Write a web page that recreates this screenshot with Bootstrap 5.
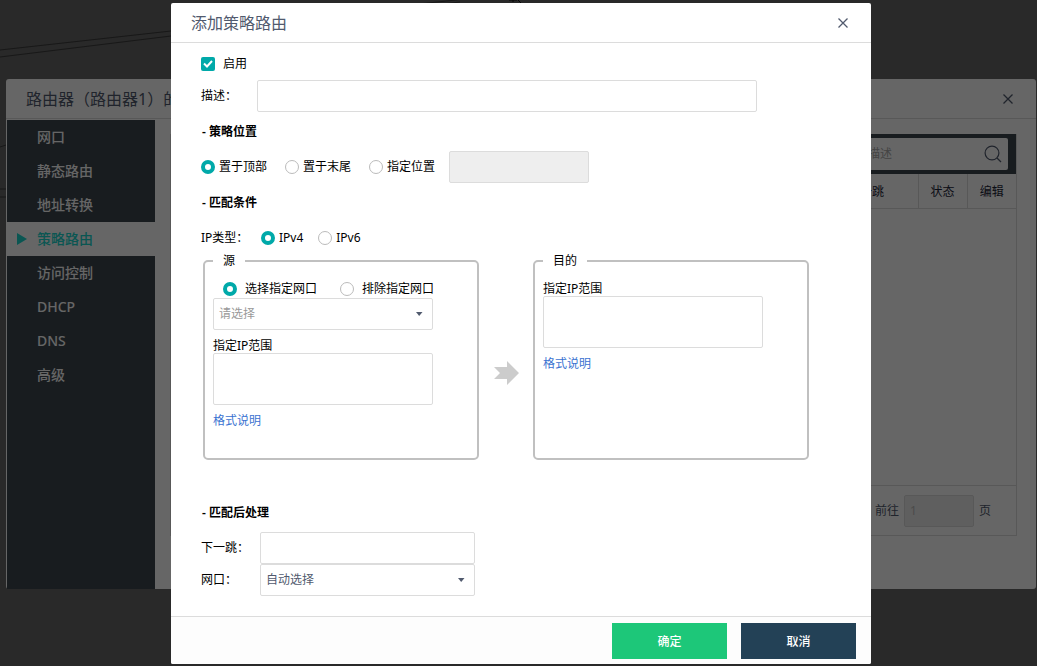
<!DOCTYPE html>
<html lang="zh-CN">
<head>
<meta charset="utf-8">
<meta name="viewport" content="width=device-width, initial-scale=1">
<title>添加策略路由</title>
<link href="https://cdn.jsdelivr.net/npm/bootstrap@5.3.0/dist/css/bootstrap.min.css" rel="stylesheet">
<style>
  :root { --teal: #00a9a9; --line: #dcdcdc; --ink: #515a6e; }
  body {
    min-height: 100vh; background: #666; color: #000; overflow: hidden;
    font: 12px/18px "Noto Sans", "Noto Sans CJK SC", sans-serif;
  }
  /* canvas lines behind the windows */
  .topology { top: 0; left: 0; }

  /* router window */
  .router-window { margin: 79px 1px 0 6px; background: #fff; border-radius: 3px; }
  .title-bar { height: 40px; padding: 0 20px; font-size: 16px; color: var(--ink); border-bottom: 1px solid var(--line); }
  .title-bar h1, .title-bar h2 { font-size: 16px; font-weight: 400; line-height: 24px; }
  .close-x { width: 16px; height: 16px; color: var(--ink); line-height: 0; }
  .side-menu { width: 148px; min-height: 469px; margin: 1px 0 0 1px; background: #3c464e; }
  .side-menu .nav-link { height: 34px; padding: 0 0 0 30px; font-size: 14px; line-height: 34px; font-weight: 500; color: #fff; position: relative; }
  .side-menu .nav-link.active { background: #fff; color: #1ad6ce; }
  .side-menu .nav-link.active::before {
    content: ""; position: absolute; left: 10px; top: 11px;
    border: 6px solid transparent; border-left: 10px solid #1ad6ce; border-right: 0;
  }
  .route-panel { margin: 15px 19px 53px 15px; border: 1px solid var(--line); border-top: 0; }
  .tools { height: 40px; padding: 4px 8px; background: #3c464e; }
  .find-box { width: 160px; height: 32px; background: #fff; border-radius: 2px; padding: 0 6px 0 20px; }
  .find-box input { min-width: 0; border: 0; padding: 0; background: none; }
  .find-box input::placeholder { color: #aaa; opacity: 1; }
  .routes { margin: 0; table-layout: fixed; color: #1c2438; }
  .routes th { height: 34px; padding: 2px 0 0; font-weight: 400; text-align: center; vertical-align: middle; border: solid var(--line); border-width: 0 1px 1px 0; }
  .routes th:last-child { border-right: 0; }
  .pager { height: 50px; padding: 0 25px; gap: 5px; border-top: 1px solid var(--line); color: var(--ink); }
  .pager input { width: 70px; background: #eee; color: #bbb; }

  .shade { background: rgba(0, 0, 0, .6); padding: 3px 0 0 5px; }

  /* dialog */
  .route-dialog { max-width: 700px; margin: 0 auto; background: #fff; border-radius: 2px; }
  .route-form { padding: 12px 30px 20px; }
  .route-form label, .route-form .tag { line-height: 18px; }
  .box { height: 32px; padding: 0 5px; border: 1px solid var(--line); border-radius: 2px; font-size: 12px; color: var(--ink); background-color: #fff; }
  textarea.box { display: block; width: 220px; height: 52px; resize: none; }
  input.box:disabled { background-color: #eee; }
  select.box {
    appearance: none; background-repeat: no-repeat; background-position: right 9px center;
    background-image: url("data:image/svg+xml,%3Csvg xmlns='http://www.w3.org/2000/svg' width='8' height='4'%3E%3Cpath d='M1 0h6.500L4.200 4z' fill='%23515a6e'/%3E%3C/svg%3E");
  }
  select.unset { color: #999; }
  .pick { flex: none; width: 14px; height: 14px; margin: 0; appearance: none; background: #fff; border: 1px solid #bbb; }
  .pick[type=radio] { border-radius: 50%; }
  .pick[type=radio]:checked { border: 4px solid var(--teal); }
  .pick[type=checkbox]:checked {
    border: 0; border-radius: 2px; background: var(--teal) url("data:image/svg+xml,%3Csvg xmlns='http://www.w3.org/2000/svg' viewBox='0 0 14 14'%3E%3Cpath d='M3 6.5l3 3 5-5.5' fill='none' stroke='%23fff' stroke-width='2'/%3E%3C/svg%3E");
  }
  .choice { display: flex; align-items: center; gap: 4px; }
  .choice.wide { gap: 8px; }
  .step { margin: 11px 0 10px; padding-left: 1px; font-size: 12px; line-height: 18px; font-weight: 600; }
  .desc-row { margin-top: 7px; }
  .desc-tag { width: 56px; }
  .next-tag { width: 59px; }
  .wide-input { width: 500px; }
  .place-row { gap: 18px; }
  .place-input { width: 140px; margin-left: -4px; }
  .ip-row { gap: 15px; margin-top: 7px; }
  .ip-tag { width: 45px; }
  .next-input { width: 215px; }
  .ends { gap: 54px; margin: 5px 0 33px 2px; position: relative; }
  .ends fieldset { flex: 0 1 276px; height: 208px; padding: 0 8px; border: 2px solid #c0c0c0; border-radius: 5px; }
  .ends legend { float: none; width: auto; margin: 0; padding: 0 10px; font-size: 12px; line-height: 18px; }
  .ends a { display: inline-block; margin-top: 7px; color: #3b73d1; text-decoration: none; }
  .port-row { gap: 23px; padding: 10px 0 0 10px; }
  .port-select { display: block; width: 220px; }
  .range-tag { display: block; padding-top: 7px; height: 23px; }
  fieldset > legend + .range-tag { padding-top: 10px; height: 26px; }
  .flow-arrow { left: 291px; top: 109px; }
  .dialog-foot { height: 48px; padding: 0 15px; gap: 14px; background: #fdfdfd; border-top: 1px solid var(--line); border-radius: 0 0 2px 2px; }
  .dialog-foot .btn { width: 115px; height: 36px; padding: 2px 0 0; border: 0; border-radius: 0; font-size: 12px; font-weight: 500; color: #fff; }
  .ok { background: #1dc779; }
  .cancel { background: #234156; }
</style>
</head>
<body class="position-relative">
  <svg class="topology position-absolute" width="540" height="210" fill="none" stroke="#3c3c3c" aria-hidden="true">
    <path d="M0 50L171 31L400 6L540-9M0 57L171 36L460 2M0 147l6-2M0 189h6M0 197h6"/>
    <path d="M509 0h8M513 0v2M518 0l4 4" stroke="#111"/>
  </svg>

  <div class="router-window position-relative">
    <header class="title-bar d-flex align-items-center justify-content-between">
      <h1 class="m-0">路由器（路由器1）的</h1>
      <button class="close-x btn p-0 border-0" type="button" aria-label="关闭">
        <svg width="16" height="16" viewBox="0 0 16 16" stroke="currentColor" stroke-width="1.3"><path d="M3.500 3.500l9 9M12.500 3.500l-9 9"/></svg>
      </button>
    </header>
    <div class="d-flex">
      <nav class="side-menu nav flex-column flex-nowrap flex-shrink-0">
        <a class="nav-link" href="#">网口</a>
        <a class="nav-link" href="#">静态路由</a>
        <a class="nav-link" href="#">地址转换</a>
        <a class="nav-link active" href="#">策略路由</a>
        <a class="nav-link" href="#">访问控制</a>
        <a class="nav-link" href="#">DHCP</a>
        <a class="nav-link" href="#">DNS</a>
        <a class="nav-link" href="#">高级</a>
      </nav>
      <section class="route-panel flex-fill d-flex flex-column">
        <div class="tools d-flex justify-content-end">
          <div class="find-box d-flex align-items-center justify-content-between">
            <input class="flex-fill" type="text" placeholder="描述" aria-label="描述">
            <svg class="flex-shrink-0" width="18" height="18" viewBox="0 0 18 18" fill="none" stroke="#515a6e" stroke-width="1.2"><circle cx="8" cy="8" r="6.9"/><path d="M13 13l4 4"/></svg>
          </div>
        </div>
        <table class="routes w-100">
          <colgroup><col><col width="104"><col width="49"><col width="49"></colgroup>
          <thead><tr><th></th><th>下一跳</th><th>状态</th><th>编辑</th></tr></thead>
        </table>
        <div class="pager mt-auto d-flex align-items-center justify-content-end">
          <label for="page">前往</label>
          <input class="box" id="page" type="text" value="1">
          <span>页</span>
        </div>
      </section>
    </div>
  </div>

  <div class="shade position-absolute top-0 start-0 w-100 h-100">
    <div class="route-dialog" role="dialog" aria-labelledby="dialog-title">
      <header class="title-bar d-flex align-items-center justify-content-between">
        <h2 class="m-0" id="dialog-title">添加策略路由</h2>
        <button class="close-x btn p-0 border-0" type="button" aria-label="关闭">
          <svg width="16" height="16" viewBox="0 0 16 16" stroke="currentColor" stroke-width="1.3"><path d="M3.500 3.500l9 9M12.500 3.500l-9 9"/></svg>
        </button>
      </header>
      <form id="route" class="route-form d-flex flex-column">
        <label class="choice wide"><input class="pick" type="checkbox" checked>启用</label>
        <div class="desc-row d-flex align-items-center">
          <label class="desc-tag" for="desc">描述：</label>
          <input class="box wide-input" id="desc" type="text">
        </div>
        <h3 class="step">- 策略位置</h3>
        <div class="place-row d-flex align-items-center">
          <label class="choice"><input class="pick" type="radio" name="place" checked>置于顶部</label>
          <label class="choice"><input class="pick" type="radio" name="place">置于末尾</label>
          <label class="choice"><input class="pick" type="radio" name="place">指定位置</label>
          <input class="box place-input" type="text" aria-label="指定位置" disabled>
        </div>
        <h3 class="step">- 匹配条件</h3>
        <div class="ip-row d-flex align-items-center">
          <span class="tag ip-tag text-nowrap">IP类型：</span>
          <label class="choice"><input class="pick" type="radio" name="ip" checked>IPv4</label>
          <label class="choice"><input class="pick" type="radio" name="ip">IPv6</label>
        </div>
        <div class="ends d-flex">
          <fieldset>
            <legend>源</legend>
            <div class="port-row d-flex">
              <label class="choice wide"><input class="pick" type="radio" name="port" checked>选择指定网口</label>
              <label class="choice wide"><input class="pick" type="radio" name="port">排除指定网口</label>
            </div>
            <select class="box port-select unset" aria-label="选择网口"><option>请选择</option></select>
            <label class="range-tag" for="src">指定IP范围</label>
            <textarea class="box" id="src"></textarea>
            <a href="#">格式说明</a>
          </fieldset>
          <svg class="flow-arrow position-absolute" width="26" height="24" aria-hidden="true"><path d="M0 6h13V0l12 12-12 12v-6H0l6-6z" fill="#ccc"/></svg>
          <fieldset>
            <legend>目的</legend>
            <label class="range-tag" for="dst">指定IP范围</label>
            <textarea class="box" id="dst"></textarea>
            <a href="#">格式说明</a>
          </fieldset>
        </div>
        <h3 class="step">- 匹配后处理</h3>
        <div class="d-flex align-items-center">
          <label class="next-tag" for="hop">下一跳：</label>
          <input class="box next-input" id="hop" type="text">
        </div>
        <div class="d-flex align-items-center">
          <label class="next-tag" for="port">网口：</label>
          <select class="box next-input" id="port"><option>自动选择</option></select>
        </div>
      </form>
      <footer class="dialog-foot d-flex align-items-center justify-content-end">
        <button class="btn ok" type="submit" form="route">确定</button>
        <button class="btn cancel" type="button">取消</button>
      </footer>
    </div>
  </div>
<script src="https://cdn.jsdelivr.net/npm/bootstrap@5.3.0/dist/js/bootstrap.bundle.min.js"></script>
</body>
</html>
